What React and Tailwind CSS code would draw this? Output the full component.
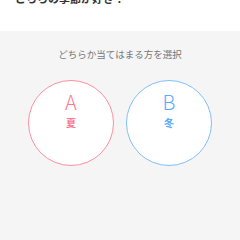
const App = () => {
    return (
        <div className="w-[240px] h-[240px] overflow-hidden bg-[#f5f5f5]" style={{ fontFamily: '"Noto Sans CJK JP", "Noto Sans", sans-serif' }}>
            <header className="h-[31px] bg-white overflow-hidden">
                <h1 className="-mt-[9px] ml-[15px] text-[11px] leading-[14px] font-bold text-[#333]">どちらの季節が好き？</h1>
            </header>
            <main className="flex flex-col items-center">
                <p className="mt-[16px] text-[9.5px] leading-[14px] text-[#777]">どちらか当てはまる方を選択</p>
                <div className="mt-[19px] flex gap-[12px]">
                    <button className="w-[86px] h-[86px] rounded-full border border-[#ff8fa0] bg-white flex flex-col items-center pt-[9px] text-[#ff7890]">
                        <span className="text-[20px] leading-[24px] font-light">A</span>
                        <span className="mt-[2px] text-[10px] leading-[14px] font-bold">夏</span>
                    </button>
                    <button className="w-[86px] h-[86px] rounded-full border border-[#80bfff] bg-white flex flex-col items-center pt-[9px] text-[#5aaaff]">
                        <span className="text-[20px] leading-[24px] font-light">B</span>
                        <span className="mt-[2px] text-[10px] leading-[14px] font-bold">冬</span>
                    </button>
                </div>
            </main>
        </div>
    )
}

export default App
